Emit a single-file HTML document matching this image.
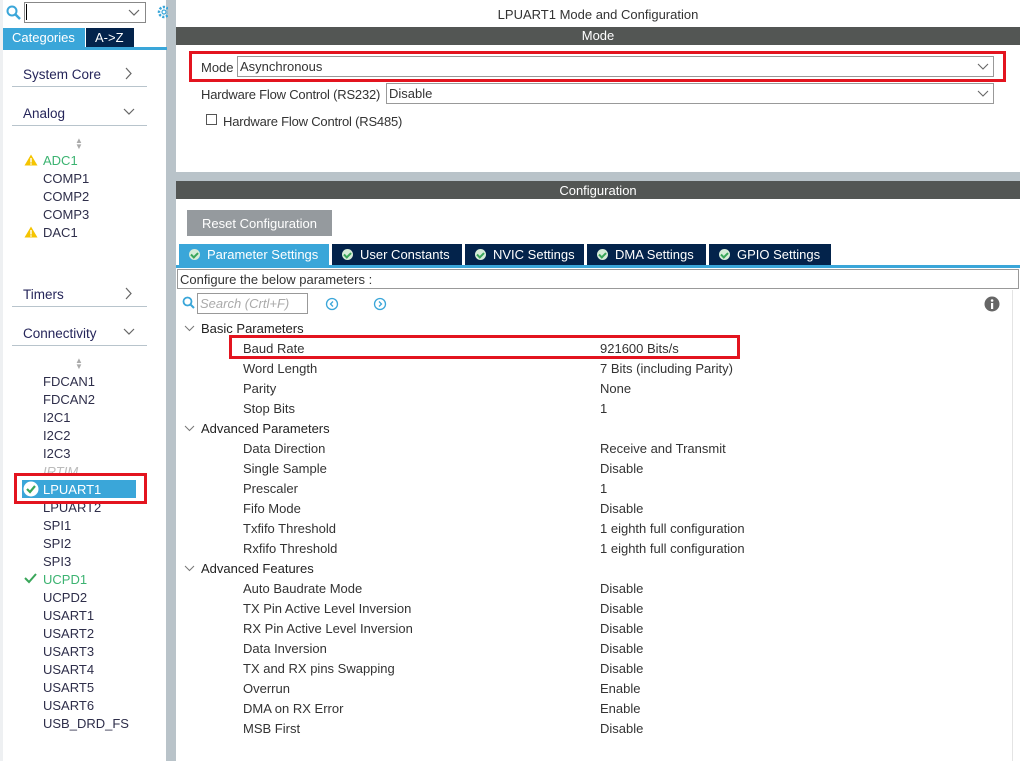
<!DOCTYPE html>
<html><head><meta charset="utf-8"><style>
*{margin:0;padding:0;box-sizing:border-box}
body{width:1020px;height:761px;overflow:hidden;background:#fff;font-family:"Liberation Sans",sans-serif;font-size:13px;color:#333;position:relative}
.a{position:absolute;white-space:nowrap}
.li{position:absolute;left:43px;font-size:13px;color:#2e2e4a;line-height:18px;margin-top:1px}
.cat{position:absolute;left:23px;font-size:13.5px;color:#25255a;margin-top:1px}
.sep{position:absolute;left:12px;width:135px;height:1px;background:#b8c4cc}
.pl{position:absolute;left:243px;line-height:20px;margin-top:1px}
.pv{position:absolute;left:600px;line-height:20px;margin-top:1px}
.gh{position:absolute;left:201px;line-height:20px;color:#222;margin-top:1px}
.tab{position:absolute;top:244px;height:21px;background:#03234b;color:#fff;font-size:13px;line-height:21px;padding-left:10px}
.tab i{display:inline-block;width:11px;height:11px;border-radius:50%;background:#d6ecd8;margin-right:7px;vertical-align:-1px;position:relative}
.tab i:after{content:"";position:absolute;left:3px;top:2px;width:3px;height:5px;border:solid #3aa65a;border-width:0 2px 2px 0;transform:rotate(45deg)}
</style></head><body>
<div class="a" style="left:0;top:0;width:3px;height:761px;background:#eef0f2"></div>
<div class="a" style="left:166px;top:0;width:10px;height:761px;background:#b9c3c9"></div>
<svg class="a" style="left:6px;top:5px" width="16" height="16"><circle cx="6" cy="6" r="4.5" fill="none" stroke="#3aa6d9" stroke-width="2"/><line x1="9.5" y1="9.5" x2="14" y2="14" stroke="#3aa6d9" stroke-width="2.5"/></svg>
<div class="a" style="left:24px;top:2px;width:122px;height:21px;border:1px solid #888;background:#fff"></div>
<div class="a" style="left:26px;top:4px;width:1px;height:16px;background:#000"></div>
<svg class="a" style="left:128px;top:9px" width="12" height="8"><path d="M1 1 L6 6 L11 1" fill="none" stroke="#666" stroke-width="1.2"/></svg>
<svg class="a" style="left:156px;top:4px" width="12" height="16"><circle cx="8" cy="8" r="5" fill="none" stroke="#3aa6d9" stroke-width="2.5" stroke-dasharray="2.2 1.5"/><circle cx="8" cy="8" r="2" fill="none" stroke="#3aa6d9" stroke-width="1.2"/></svg>
<div class="a" style="left:3px;top:28px;width:82px;height:19px;background:#3aa6d9;color:#fff;font-size:13px;line-height:19px;padding-left:9px">Categories</div>
<div class="a" style="left:86px;top:28px;width:48px;height:19px;background:#03234b;color:#fff;font-size:13px;line-height:19px;padding-left:9px">A-&gt;Z</div>
<div class="a" style="left:3px;top:47px;width:164px;height:3px;background:#3aa6d9"></div>
<div class="cat" style="top:66px">System Core</div><svg class="a" style="left:125px;top:67px" width="8" height="13"><path d="M1 1 L6 6.5 L1 12" fill="none" stroke="#666" stroke-width="1.2"/></svg><div class="sep" style="top:86px"></div>
<div class="cat" style="top:105px">Analog</div><svg class="a" style="left:123px;top:108px" width="12" height="8"><path d="M1 1 L6 6 L11 1" fill="none" stroke="#666" stroke-width="1.2"/></svg><div class="sep" style="top:125px"></div>
<div class="a" style="left:75px;top:138px;color:#aaa;font-size:8px;line-height:6px">▲<br>▼</div>
<svg class="a" style="left:24px;top:154px" width="14" height="12"><path d="M7 0.5 L13.5 11.5 L0.5 11.5Z" fill="#f5c400"/><rect x="6.3" y="4" width="1.4" height="4.5" fill="#fff"/><rect x="6.3" y="9.3" width="1.4" height="1.4" fill="#fff"/></svg>
<div class="li" style="top:151px;color:#3cb371">ADC1</div>
<div class="li" style="top:169px">COMP1</div>
<div class="li" style="top:187px">COMP2</div>
<div class="li" style="top:205px">COMP3</div>
<svg class="a" style="left:24px;top:226px" width="14" height="12"><path d="M7 0.5 L13.5 11.5 L0.5 11.5Z" fill="#f5c400"/><rect x="6.3" y="4" width="1.4" height="4.5" fill="#fff"/><rect x="6.3" y="9.3" width="1.4" height="1.4" fill="#fff"/></svg>
<div class="li" style="top:223px">DAC1</div>
<div class="cat" style="top:286px">Timers</div><svg class="a" style="left:125px;top:287px" width="8" height="13"><path d="M1 1 L6 6.5 L1 12" fill="none" stroke="#666" stroke-width="1.2"/></svg><div class="sep" style="top:306px"></div>
<div class="cat" style="top:325px">Connectivity</div><svg class="a" style="left:123px;top:328px" width="12" height="8"><path d="M1 1 L6 6 L11 1" fill="none" stroke="#666" stroke-width="1.2"/></svg><div class="sep" style="top:345px"></div>
<div class="a" style="left:75px;top:358px;color:#aaa;font-size:8px;line-height:6px">▲<br>▼</div>
<div class="li" style="top:372px">FDCAN1</div>
<div class="li" style="top:390px">FDCAN2</div>
<div class="li" style="top:408px">I2C1</div>
<div class="li" style="top:426px">I2C2</div>
<div class="li" style="top:444px">I2C3</div>
<div class="li" style="top:462px;color:#bbb;font-style:italic">IRTIM</div>
<div class="li" style="top:498px">LPUART2</div>
<div class="a" style="left:22px;top:480px;width:114px;height:18px;background:#3aa6d9"></div>
<svg class="a" style="left:23px;top:481px" width="16" height="16"><circle cx="8" cy="8" r="7.5" fill="#fff"/><path d="M4 8 L7 11 L12 5" fill="none" stroke="#3aa65a" stroke-width="2.2"/></svg>
<div class="li" style="top:480px;color:#fff">LPUART1</div>
<div class="a" style="left:14px;top:473px;width:133px;height:31px;border:3px solid #e3141f"></div>
<div class="li" style="top:516px">SPI1</div>
<div class="li" style="top:534px">SPI2</div>
<div class="li" style="top:552px">SPI3</div>
<svg class="a" style="left:24px;top:573px" width="13" height="11"><path d="M1 5 L5 9 L12 1" fill="none" stroke="#3aa65a" stroke-width="2"/></svg>
<div class="li" style="top:570px;color:#3cb371">UCPD1</div>
<div class="li" style="top:588px">UCPD2</div>
<div class="li" style="top:606px">USART1</div>
<div class="li" style="top:624px">USART2</div>
<div class="li" style="top:642px">USART3</div>
<div class="li" style="top:660px">USART4</div>
<div class="li" style="top:678px">USART5</div>
<div class="li" style="top:696px">USART6</div>
<div class="li" style="top:714px">USB_DRD_FS</div>

<div class="a" style="left:176px;top:7px;width:844px;text-align:center;font-size:13px;color:#333">LPUART1 Mode and Configuration</div>
<div class="a" style="left:176px;top:27px;width:844px;height:18px;background:#535654;color:#fff;text-align:center;line-height:18px">Mode</div>
<div class="a" style="left:201px;top:60px">Mode</div>
<div class="a" style="left:237px;top:56px;width:757px;height:21px;border:1px solid #999;padding-left:2px;line-height:20px">Asynchronous</div>
<svg class="a" style="left:977px;top:63px" width="12" height="8"><path d="M1 1 L6 6 L11 1" fill="none" stroke="#666" stroke-width="1.1"/></svg>
<div class="a" style="left:189px;top:51px;width:817px;height:31px;border:3px solid #e3141f"></div>
<div class="a" style="left:201px;top:87px;letter-spacing:-0.2px">Hardware Flow Control (RS232)</div>
<div class="a" style="left:386px;top:83px;width:608px;height:21px;border:1px solid #999;padding-left:2px;line-height:20px">Disable</div>
<svg class="a" style="left:977px;top:90px" width="12" height="8"><path d="M1 1 L6 6 L11 1" fill="none" stroke="#666" stroke-width="1.1"/></svg>
<div class="a" style="left:206px;top:114px;width:11px;height:11px;border:1px solid #555"></div>
<div class="a" style="left:223px;top:114px;letter-spacing:-0.2px">Hardware Flow Control (RS485)</div>
<div class="a" style="left:176px;top:172px;width:844px;height:9px;background:#b9c3c9"></div>

<div class="a" style="left:176px;top:181px;width:844px;height:18px;background:#535654;color:#fff;text-align:center;line-height:19px">Configuration</div>
<div class="a" style="left:187px;top:210px;width:145px;height:26px;background:#959a9e;color:#fff;line-height:27px;text-align:center">Reset Configuration</div>
<div class="tab" style="left:179px;width:150px;background:#3aa6d9"><i></i>Parameter Settings</div>
<div class="tab" style="left:332px;width:130px"><i></i>User Constants</div>
<div class="tab" style="left:465px;width:119px"><i></i>NVIC Settings</div>
<div class="tab" style="left:587px;width:119px"><i></i>DMA Settings</div>
<div class="tab" style="left:709px;width:122px"><i></i>GPIO Settings</div>
<div class="a" style="left:176px;top:265px;width:844px;height:3px;background:#3aa6d9"></div>
<div class="a" style="left:177px;top:269px;width:842px;height:20px;border:1px solid #999;line-height:19px;padding-left:2px">Configure the below parameters :</div>
<svg class="a" style="left:182px;top:296px" width="14" height="14"><circle cx="5.5" cy="5.5" r="4" fill="none" stroke="#3aa6d9" stroke-width="1.8"/><line x1="8.5" y1="8.5" x2="12" y2="12" stroke="#3aa6d9" stroke-width="2"/></svg>
<div class="a" style="left:197px;top:293px;width:111px;height:21px;border:1px solid #999;color:#aaa;font-style:italic;line-height:20px;padding-left:2px">Search (Crtl+F)</div>
<svg class="a" style="left:325px;top:297px" width="14" height="14"><circle cx="7" cy="7" r="5.5" fill="none" stroke="#3aa6d9" stroke-width="1.3"/><path d="M8 4.5 L5.5 7 L8 9.5" fill="none" stroke="#3aa6d9" stroke-width="1.3"/></svg>
<svg class="a" style="left:373px;top:297px" width="14" height="14"><circle cx="7" cy="7" r="5.5" fill="none" stroke="#3aa6d9" stroke-width="1.3"/><path d="M6 4.5 L8.5 7 L6 9.5" fill="none" stroke="#3aa6d9" stroke-width="1.3"/></svg>
<svg class="a" style="left:984px;top:296px" width="16" height="16"><circle cx="8" cy="8" r="7.5" fill="#666"/><rect x="7" y="7" width="2.2" height="6" fill="#fff"/><circle cx="8.1" cy="4.5" r="1.3" fill="#fff"/></svg>
<div class="a" style="left:1012px;top:290px;width:1px;height:471px;background:#e4e4e4"></div>

<svg class="a" style="left:184px;top:325px" width="11" height="7"><path d="M1 1 L5.5 5.5 L10 1" fill="none" stroke="#777" stroke-width="1"/></svg><div class="gh" style="top:318px">Basic Parameters</div>
<div class="pl" style="top:338px">Baud Rate</div><div class="pv" style="top:338px">921600 Bits/s</div>
<div class="a" style="left:229px;top:335px;width:511px;height:24px;border:3px solid #e3141f"></div>
<div class="pl" style="top:358px">Word Length</div><div class="pv" style="top:358px">7 Bits (including Parity)</div>
<div class="pl" style="top:378px">Parity</div><div class="pv" style="top:378px">None</div>
<div class="pl" style="top:398px">Stop Bits</div><div class="pv" style="top:398px">1</div>
<svg class="a" style="left:184px;top:425px" width="11" height="7"><path d="M1 1 L5.5 5.5 L10 1" fill="none" stroke="#777" stroke-width="1"/></svg><div class="gh" style="top:418px">Advanced Parameters</div>
<div class="pl" style="top:438px">Data Direction</div><div class="pv" style="top:438px">Receive and Transmit</div>
<div class="pl" style="top:458px">Single Sample</div><div class="pv" style="top:458px">Disable</div>
<div class="pl" style="top:478px">Prescaler</div><div class="pv" style="top:478px">1</div>
<div class="pl" style="top:498px">Fifo Mode</div><div class="pv" style="top:498px">Disable</div>
<div class="pl" style="top:518px">Txfifo Threshold</div><div class="pv" style="top:518px">1 eighth full configuration</div>
<div class="pl" style="top:538px">Rxfifo Threshold</div><div class="pv" style="top:538px">1 eighth full configuration</div>
<svg class="a" style="left:184px;top:565px" width="11" height="7"><path d="M1 1 L5.5 5.5 L10 1" fill="none" stroke="#777" stroke-width="1"/></svg><div class="gh" style="top:558px">Advanced Features</div>
<div class="pl" style="top:578px">Auto Baudrate Mode</div><div class="pv" style="top:578px">Disable</div>
<div class="pl" style="top:598px">TX Pin Active Level Inversion</div><div class="pv" style="top:598px">Disable</div>
<div class="pl" style="top:618px">RX Pin Active Level Inversion</div><div class="pv" style="top:618px">Disable</div>
<div class="pl" style="top:638px">Data Inversion</div><div class="pv" style="top:638px">Disable</div>
<div class="pl" style="top:658px">TX and RX pins Swapping</div><div class="pv" style="top:658px">Disable</div>
<div class="pl" style="top:678px">Overrun</div><div class="pv" style="top:678px">Enable</div>
<div class="pl" style="top:698px">DMA on RX Error</div><div class="pv" style="top:698px">Enable</div>
<div class="pl" style="top:718px">MSB First</div><div class="pv" style="top:718px">Disable</div>
</body></html>
